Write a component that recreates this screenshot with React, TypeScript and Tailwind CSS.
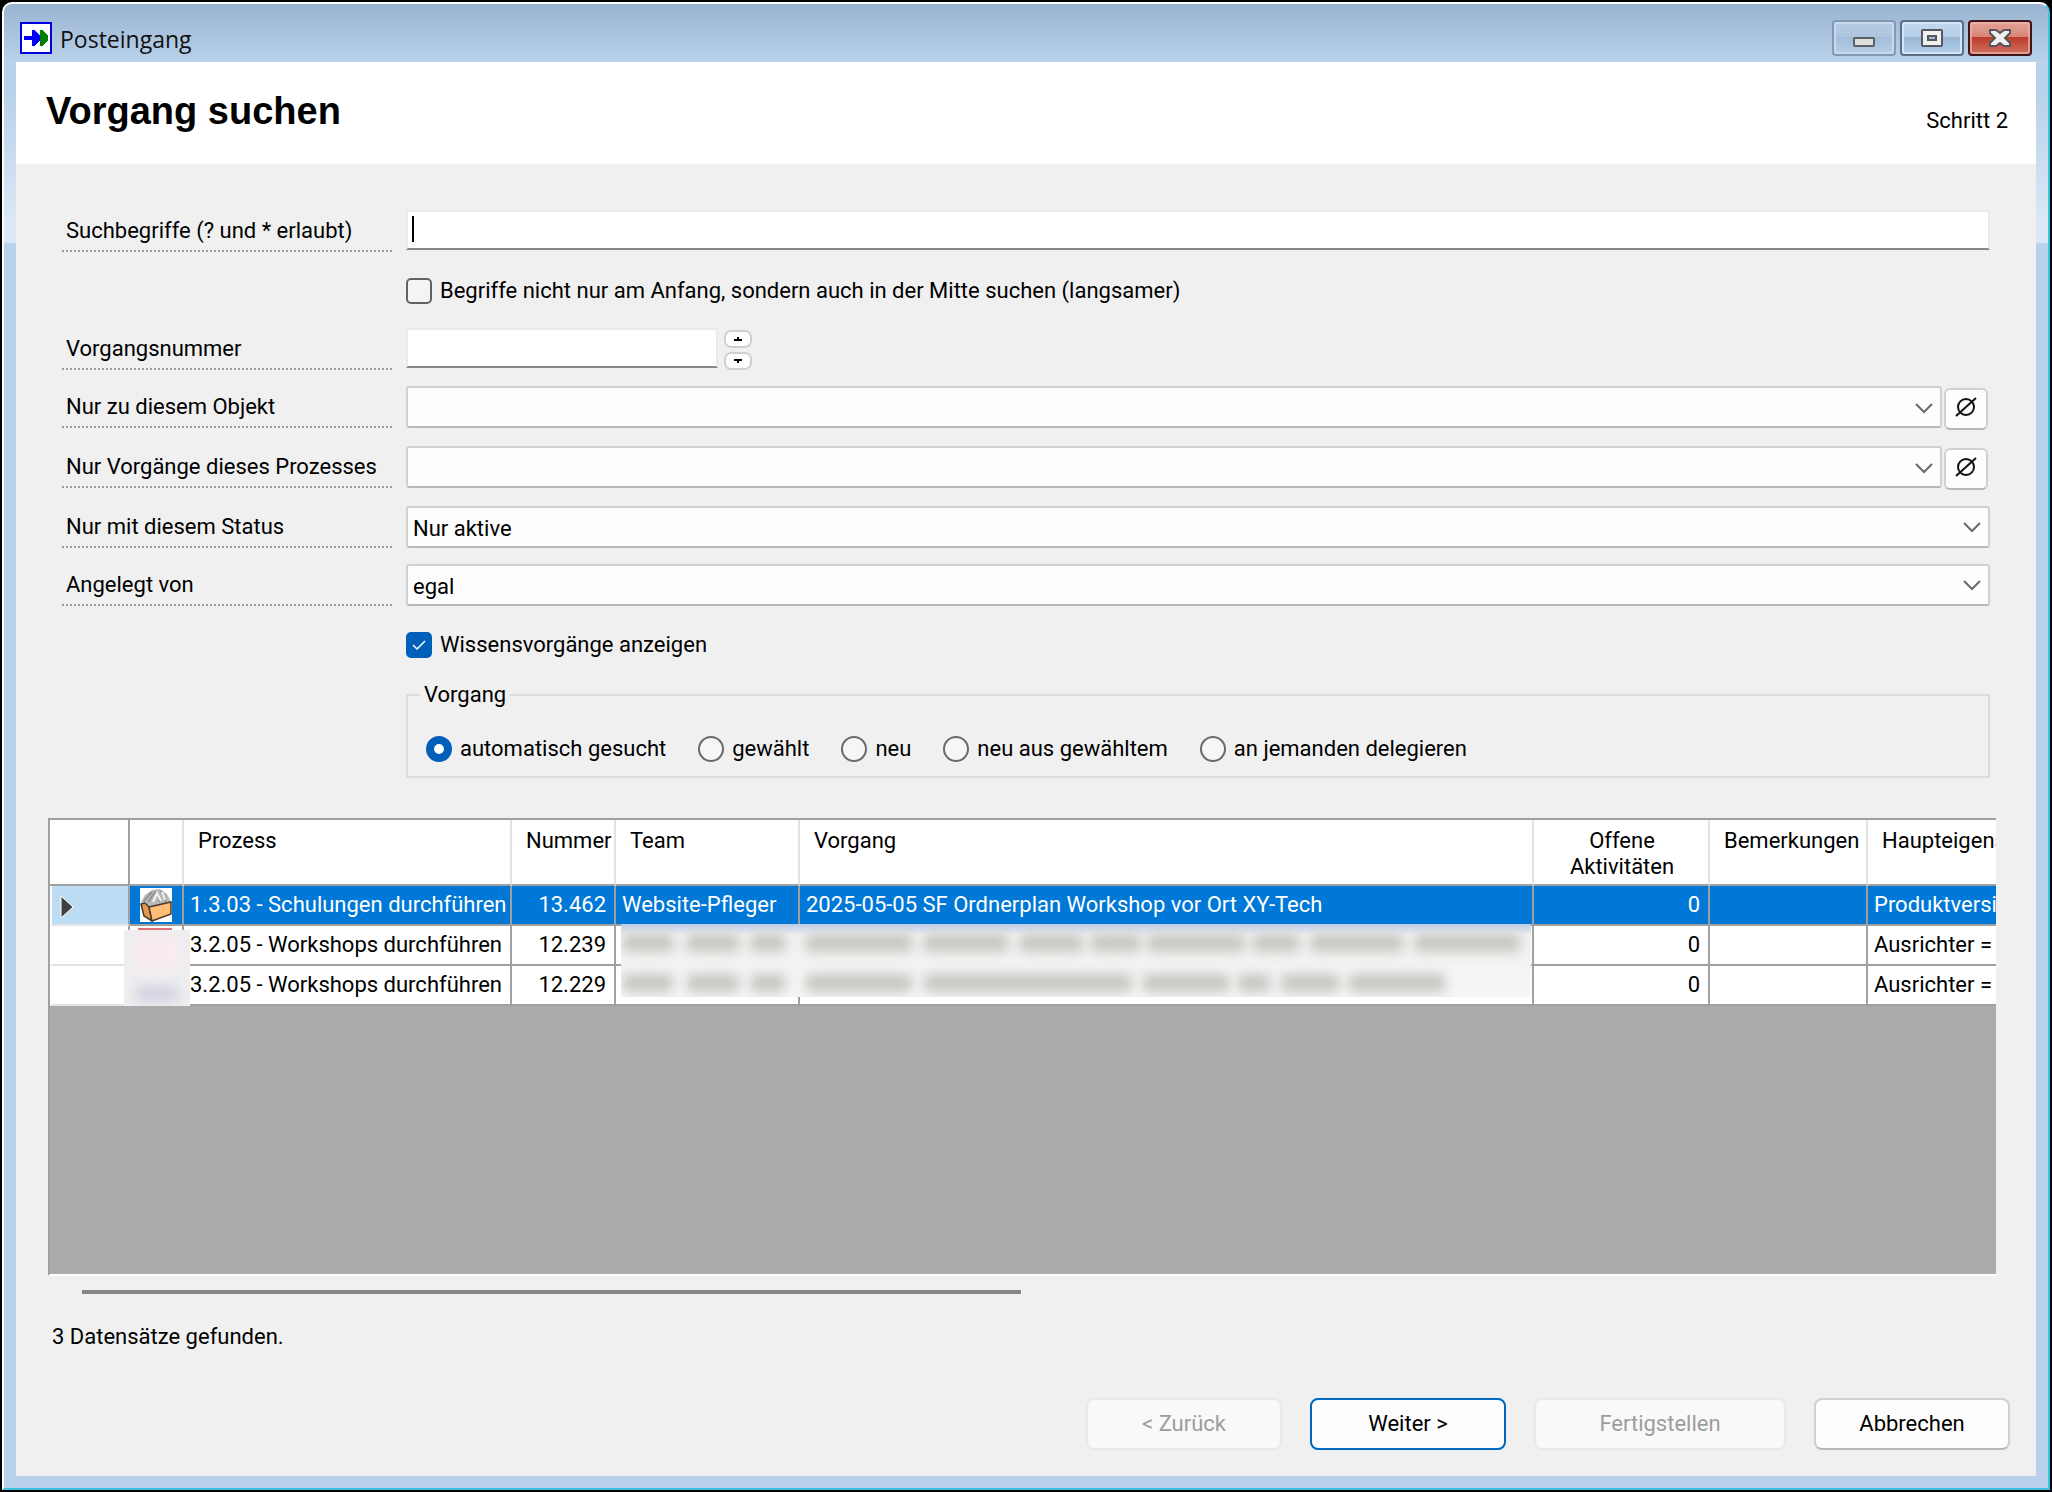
import type { ReactNode } from 'react';
import clsx from 'clsx';

const RADIO_OPTIONS = [
  'automatisch gesucht',
  'gewählt',
  'neu',
  'neu aus gewähltem',
  'an jemanden delegieren',
];

const ROWS = [
  {
    id: 1,
    prozess: '1.3.03 - Schulungen durchführen',
    nummer: '13.462',
    team: 'Website-Pfleger',
    vorgang: '2025-05-05 SF Ordnerplan Workshop vor Ort XY-Tech',
    offen: 0,
    haupt: 'Produktversion',
  },
  { id: 2, prozess: '3.2.05 - Workshops durchführen', nummer: '12.239', team: '', vorgang: '', offen: 0, haupt: 'Ausrichter = K' },
  { id: 3, prozess: '3.2.05 - Workshops durchführen', nummer: '12.229', team: '', vorgang: '', offen: 0, haupt: 'Ausrichter = S' },
];

// start and width of each unreadable word, per row
const HIDDEN_WORDS = [
  [[2, 50], [66, 52], [130, 34], [185, 106], [303, 84], [399, 62], [470, 49], [527, 96], [632, 46], [690, 92], [794, 105]],
  [[2, 50], [66, 52], [130, 34], [185, 106], [303, 208], [522, 86], [617, 32], [660, 58], [728, 96]],
];

function AppLogo() {
  return (
    <svg className="h-8 w-8" viewBox="0 0 32 32" shapeRendering="crispEdges">
      <rect x="1" y="1" width="30" height="30" fill="#fff" stroke="#0000e0" strokeWidth="2" />
      <path d="M4 14h8V8h2l6 6v4l-6 6h-2v-6H4z" fill="#0000ff" />
      <path d="M20 8h2l6 6v4l-6 6h-2z" fill="#008000" />
    </svg>
  );
}

function FolderIcon() {
  return (
    <svg className="block h-[34px] w-8" viewBox="0 0 32 34">
      <rect width="32" height="34" fill="#fff" />
      <path d="M1 14l4-7 7-5 8-1 7 5 4 8-22 5z" fill="#b8b8b8" />
      <path d="M4 13l8-9M8 14l8-11M21 3l5 11M17 4l3 10" fill="none" stroke="#8d8d8d" strokeWidth="1.5" />
      <path d="M13 14l4-9 4 8M25 12l-3-8" fill="none" stroke="#f4f4f4" strokeWidth="2" />
      <path d="M1 16l4-1 4 4 3 14-8-5z" fill="#e09a4e" stroke="#4a3a28" strokeWidth="1.5" />
      <path d="M9 19l22-5v12l-19 7z" fill="#ffbd75" stroke="#4a3a28" strokeWidth="1.5" />
    </svg>
  );
}

function Chevron() {
  return (
    <svg
      className="pointer-events-none absolute right-[9px] top-1/2 h-4 w-[18px] -translate-y-1/2"
      viewBox="0 0 18 16"
      fill="none"
      stroke="#6a6a6a"
      strokeWidth="2"
    >
      <path d="M1 4l8 8 8-8" />
    </svg>
  );
}

function WindowButton({ label, danger, faded, children }: { label: string; danger?: boolean; faded?: boolean; children: ReactNode }) {
  return (
    <button
      aria-label={label}
      className={clsx(
        'flex h-9 w-16 items-center justify-center rounded-[4px] border-2 inset-ring-2',
        danger
          ? 'border-[#43141a] bg-[linear-gradient(#e5a49b_0%,#d98577_46%,#b93c28_47%,#d0705f_100%)] inset-ring-[#e9b5ad]/70'
          : faded
            ? 'border-[#8399b3] bg-[linear-gradient(#b4cbe3_0%,#adc6e0_46%,#a3bdd8_47%,#b4cee9_100%)] inset-ring-[#c8dbee]'
            : 'border-[#5b6f89] bg-[linear-gradient(#c3d8ee_0%,#b4cde6_46%,#98b4d1_47%,#b3d0ec_100%)] inset-ring-[#d3e5f6]',
      )}
    >
      {children}
    </button>
  );
}

function Row({ label, htmlFor, children }: { label: string; htmlFor: string; children: ReactNode }) {
  return (
    <div className="flex items-start gap-[14px]">
      <label
        htmlFor={htmlFor}
        className="h-[42px] w-[330px] shrink-0 border-b-2 border-dotted border-[#9a9a9a] pl-1 pt-2"
      >
        {label}
      </label>
      {children}
    </div>
  );
}

function SelectBox({ id, value }: { id: string; value: string }) {
  return (
    <div className="relative min-w-0 flex-1">
      <select
        id={id}
        className="block h-[42px] w-full appearance-none rounded-[3px] border-2 border-[#d0d0d0] border-b-[#b8b8b8] bg-[#fdfdfd] px-[5px] pt-[3px] outline-none"
      >
        <option>{value}</option>
      </select>
      <Chevron />
    </div>
  );
}

function EmptySetButton({ label }: { label: string }) {
  return (
    <button
      type="button"
      aria-label={label}
      className="ml-0.5 mt-0.5 flex h-[42px] w-11 shrink-0 items-center justify-center rounded-md border-2 border-[#d0d0d0] border-b-[#b8b8b8] bg-[#fdfdfd] pb-1"
    >
      <svg className="h-[22px] w-[22px]" viewBox="0 0 22 22" fill="none" stroke="#111" strokeWidth="2">
        <circle cx="11" cy="11" r="8" />
        <path d="M1 20L21 2" />
      </svg>
    </button>
  );
}

function CheckRow({ id, label, checked }: { id: string; label: string; checked?: boolean }) {
  return (
    <div className="flex items-center gap-2 pb-2 pl-[344px] pt-[10px]">
      <span className="relative h-[26px] w-[26px]">
        <input
          id={id}
          type="checkbox"
          defaultChecked={checked}
          className="block h-[26px] w-[26px] appearance-none rounded-[5px] border-2 border-[#626262] bg-[#f4f4f4] checked:border-[#005fb8] checked:bg-[#005fb8]"
        />
        {checked && (
          <svg className="pointer-events-none absolute left-[6px] top-[7px] h-3 w-[14px]" viewBox="0 0 14 12" fill="none" stroke="#fff" strokeWidth="1.5">
            <path d="M1 6l4 4 8-8" />
          </svg>
        )}
      </span>
      <label htmlFor={id}>{label}</label>
    </div>
  );
}

function WizardButton({ children, primary, wide, disabled }: { children: ReactNode; primary?: boolean; wide?: boolean; disabled?: boolean }) {
  return (
    <button
      disabled={disabled}
      className={clsx(
        'h-[52px] rounded-lg border-2',
        wide ? 'w-[252px]' : 'w-[196px]',
        disabled && 'border-[#e8e8e8] bg-[#f9f9f9] text-[#9d9d9d]',
        primary && 'border-[#0067c0] bg-[#fdfdfd]',
        !disabled && !primary && 'border-[#d0d0d0] border-b-[#b8b8b8] bg-[#fdfdfd]',
      )}
    >
      {children}
    </button>
  );
}

function ResultGrid() {
  const head = 'border-b-2 border-r-2 border-b-[#a0a0a0] border-r-[#e3e3e3] pl-[14px] pt-2 align-top font-normal whitespace-nowrap';
  const cell = 'border-b-2 border-r-2 border-[#a0a0a0] whitespace-nowrap';
  return (
    <div className="relative ml-8 mr-10 mt-10 min-h-[280px] flex-1 overflow-hidden border-b-2 border-l-2 border-t-2 border-[#a0a0a0] border-b-white bg-[#ababab]">
      <table className="w-[2078px] table-fixed border-separate border-spacing-0 bg-white text-left">
        <colgroup>
          <col className="w-20" />
          <col className="w-[54px]" />
          <col className="w-[328px]" />
          <col className="w-[104px]" />
          <col className="w-[184px]" />
          <col className="w-[734px]" />
          <col className="w-[176px]" />
          <col className="w-[158px]" />
          <col className="w-[260px]" />
        </colgroup>
        <thead>
          <tr className="h-[66px]">
            <th className="border-b-2 border-r-2 border-[#a0a0a0]" />
            <th className={head} />
            <th className={head}>Prozess</th>
            <th className={head}>Nummer</th>
            <th className={head}>Team</th>
            <th className={head}>Vorgang</th>
            <th className={clsx(head, 'pr-3 text-center')}>
              Offene
              <br />
              Aktivitäten
            </th>
            <th className={head}>Bemerkungen</th>
            <th className={head}>Haupteigenschaften</th>
          </tr>
        </thead>
        <tbody>
          {ROWS.map((r, i) => (
            <tr key={r.id} className={clsx('h-10', i === 0 && 'bg-[#0078d7] text-white')}>
              <th
                className={clsx(
                  'border-b-2 border-r-2 border-b-[#e3e3e3] border-r-[#a0a0a0] border-l-2 border-l-white',
                  i === 0 && 'bg-[#bcdcf4]',
                )}
              >
                {i === 0 && (
                  <svg className="ml-2 mt-1 h-6 w-[14px]" viewBox="0 0 14 24">
                    <path d="M1 1v22l12-11z" fill="#404040" stroke="#fff" />
                  </svg>
                )}
              </th>
              <td className={clsx(cell, 'pl-[10px]')}>{i === 0 && <FolderIcon />}</td>
              <td className={clsx(cell, 'pl-1.5')}>{r.prozess}</td>
              <td className={clsx(cell, 'pr-2 text-right')}>{r.nummer}</td>
              <td className={clsx(cell, 'pl-1.5')}>{r.team}</td>
              <td className={clsx(cell, 'pl-1.5')}>{r.vorgang}</td>
              <td className={clsx(cell, 'pr-2 text-right')}>{r.offen}</td>
              <td className={cell} />
              <td className={clsx(cell, 'pl-1.5')}>{r.haupt}</td>
            </tr>
          ))}
        </tbody>
      </table>

      {/* anonymised icons */}
      <div className="absolute left-[74px] top-[110px] h-[76px] w-[66px] overflow-hidden bg-[#efeef0]">
        <div className="mx-3 mt-1 h-9 bg-[#f8ebed] blur-[6px]" />
        <div className="mx-3 mt-4 h-4 bg-[#d3d2e0] blur-[6px]" />
      </div>
      <div className="absolute left-[88px] top-[108px] h-0.5 w-[34px] bg-[#e0707a]" />

      {/* anonymised names */}
      <div className="absolute left-[571px] top-[104px] h-[73px] w-[910px] overflow-hidden bg-linear-to-b from-[#bccbe9] from-0% via-[#f1f1f0] via-15% to-[#f6f6f6]">
        {HIDDEN_WORDS.map((words, i) => (
          <div key={i} className="relative h-10">
            {words.map(([left, width]) => (
              <span
                key={left}
                className="absolute top-[10px] h-[18px] rounded-sm bg-[#c6c6c2] blur-[6px]"
                style={{ left, width }}
              />
            ))}
          </div>
        ))}
      </div>
    </div>
  );
}

export default function App() {
  return (
    <div className="flex min-h-screen flex-col bg-black p-0.5 font-[Roboto,'Liberation_Sans',Arial,sans-serif] text-[22px] leading-[26px] text-black">
      <div className="flex flex-1 flex-col rounded-t-[10px] border-2 border-b-[#3cc3dd] border-l-white border-r-[#3cc3dd] border-t-white bg-[#b9d1ea] bg-[linear-gradient(#99b4d1_0px,#b9d1ea_58px,#b9d1ea_90px,#dce8f5_220px,#dce8f5_238px,#b9d1ea_240px)] px-3 pb-3">
        <header className="flex h-[58px] items-center px-1 pt-[10px]">
          <AppLogo />
          <span className="ml-2 flex-1 pt-0.5 font-['Open_Sans','Noto_Sans',sans-serif] text-[23px] leading-8 text-[#111]">Posteingang</span>
          <div className="flex gap-1">
            <WindowButton label="Minimieren" faded>
              <svg className="mt-2 h-[10px] w-[22px]" viewBox="0 0 22 10">
                <rect x="1" y="1" width="20" height="8" rx="1" fill="#e0e0e0" stroke="#5f5f66" strokeWidth="2" />
              </svg>
            </WindowButton>
            <WindowButton label="Maximieren">
              <svg className="h-[18px] w-[22px]" viewBox="0 0 22 18">
                <rect x="1" y="1" width="20" height="16" rx="1" fill="#f0f0f0" stroke="#55565f" strokeWidth="2" />
                <rect x="7" y="7" width="8" height="4" fill="#9fb9d5" stroke="#55565f" strokeWidth="2" />
              </svg>
            </WindowButton>
            <WindowButton label="Schließen" danger>
              <svg className="h-[18px] w-[22px]" viewBox="0 0 22 18">
                <path d="M1 1h6l4 3 4-3h6v3l-5 5 5 5v3h-6l-4-3-4 3H1v-3l5-5-5-5z" fill="#f0f0f0" stroke="#55565f" strokeWidth="2" />
              </svg>
            </WindowButton>
          </div>
        </header>

        <main className="flex flex-1 flex-col bg-[#f0f0f0] pb-[26px]">
          <div className="flex h-[102px] items-start justify-between bg-white pl-[30px] pr-7">
            <h1 className="pt-[26px] font-['Liberation_Sans',Arial,sans-serif] text-[38px] leading-[46px] font-bold">Vorgang suchen</h1>
            <span className="pt-[46px]">Schritt 2</span>
          </div>

          <form className="mx-[46px] mt-[46px] flex flex-col gap-4">
            <Row label="Suchbegriffe (? und * erlaubt)" htmlFor="search">
              <div className="relative flex-1">
                <input
                  id="search"
                  type="text"
                  className="block h-10 w-full border-2 border-[#eaeaea] border-b-[#868686] bg-white px-1 outline-none"
                />
                <span className="absolute left-1.5 top-1.5 h-[26px] w-0.5 bg-black" />
              </div>
            </Row>

            <CheckRow id="middle" label="Begriffe nicht nur am Anfang, sondern auch in der Mitte suchen (langsamer)" />

            <Row label="Vorgangsnummer" htmlFor="number">
              <div className="flex gap-1.5">
                <input
                  id="number"
                  type="text"
                  className="block h-10 w-[312px] border-2 border-[#eaeaea] border-b-[#868686] bg-white px-1 outline-none"
                />
                <div className="flex flex-col gap-1 pt-0.5">
                  <button type="button" aria-label="Erhöhen" className="flex h-[18px] w-7 items-center justify-center rounded-[7px] border-2 border-[#d0d0d0] bg-white">
                    <svg className="h-1 w-2" viewBox="0 0 8 4" shapeRendering="crispEdges">
                      <path d="M0 4V2h3V0h2v2h3v2z" />
                    </svg>
                  </button>
                  <button type="button" aria-label="Verringern" className="flex h-[18px] w-7 items-center justify-center rounded-[7px] border-2 border-[#d0d0d0] bg-white">
                    <svg className="h-1 w-2" viewBox="0 0 8 4" shapeRendering="crispEdges">
                      <path d="M0 0v2h3v2h2V2h3V0z" />
                    </svg>
                  </button>
                </div>
              </div>
            </Row>

            <Row label="Nur zu diesem Objekt" htmlFor="object">
              <div className="flex min-w-0 flex-1 pr-0.5">
                <SelectBox id="object" value="" />
                <EmptySetButton label="Objekt leeren" />
              </div>
            </Row>
            <Row label="Nur Vorgänge dieses Prozesses" htmlFor="process">
              <div className="flex min-w-0 flex-1 pr-0.5">
                <SelectBox id="process" value="" />
                <EmptySetButton label="Prozess leeren" />
              </div>
            </Row>
            <Row label="Nur mit diesem Status" htmlFor="status">
              <SelectBox id="status" value="Nur aktive" />
            </Row>
            <Row label="Angelegt von" htmlFor="creator">
              <SelectBox id="creator" value="egal" />
            </Row>

            <CheckRow id="knowledge" label="Wissensvorgänge anzeigen" checked />

            <fieldset className="ml-[344px] border-2 border-[#dcdcdc] pb-[14px] pl-3">
              <legend className="px-1">Vorgang</legend>
              <div className="flex gap-8 pl-1.5 pt-7">
                {RADIO_OPTIONS.map((option, i) => (
                  <label key={option} className="flex items-center gap-2">
                    <input
                      type="radio"
                      name="vorgang"
                      defaultChecked={i === 0}
                      className="h-[26px] w-[26px] appearance-none rounded-full border-2 border-[#6a6a6a] bg-[#f6f6f6] checked:border-8 checked:border-[#005fb8] checked:bg-white"
                    />
                    {option}
                  </label>
                ))}
              </div>
            </fieldset>
          </form>

          <ResultGrid />

          <div className="mx-[66px] mt-[14px]">
            <div className="h-1 w-[49.75%] bg-[#868686]" />
          </div>
          <p className="ml-9 mt-[30px]">3 Datensätze gefunden.</p>

          <footer className="mt-12 flex justify-end gap-7 pr-[26px]">
            <WizardButton disabled>&lt; Zurück</WizardButton>
            <WizardButton primary>Weiter &gt;</WizardButton>
            <WizardButton disabled wide>Fertigstellen</WizardButton>
            <WizardButton>Abbrechen</WizardButton>
          </footer>
        </main>
      </div>
    </div>
  );
}
